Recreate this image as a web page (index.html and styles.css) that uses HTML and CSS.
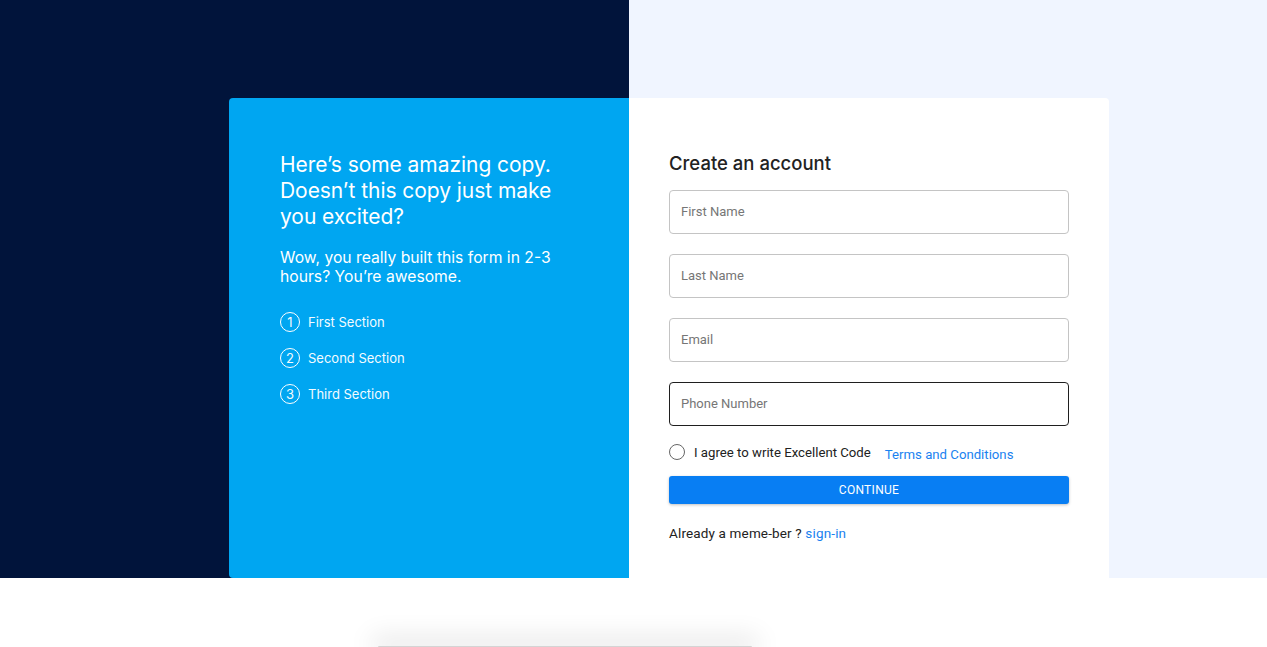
FILE: index.html
```html
<!DOCTYPE html>
<html>
<head>
<meta charset="utf-8">
<link rel="stylesheet" href="styles.css">
</head>
<body>
<section class="hero">
  <div class="card">
    <div class="promo">
      <h1 class="promo-title">Here’s some amazing copy. Doesn’t this copy just make you excited?</h1>
      <p class="promo-sub">Wow, you really built this form in 2-3 hours? You’re awesome.</p>
      <ul class="steps">
        <li class="step"><span class="step-num">1</span>First Section</li>
        <li class="step"><span class="step-num">2</span>Second Section</li>
        <li class="step"><span class="step-num">3</span>Third Section</li>
      </ul>
    </div>
    <form class="form">
      <h2 class="form-title">Create an account</h2>
      <div class="field"><input class="input" type="text" placeholder="First Name"></div>
      <div class="field"><input class="input" type="text" placeholder="Last Name"></div>
      <div class="field"><input class="input" type="text" placeholder="Email"></div>
      <div class="field"><input class="input input-focus" type="text" placeholder="Phone Number"></div>
      <div class="agree">
        <span class="radio"></span>
        <span class="agree-text">I agree to write Excellent Code</span>
        <a class="link terms">Terms and Conditions</a>
      </div>
      <button class="btn" type="button">CONTINUE</button>
      <p class="signin">Already a meme-ber ? <a class="link">sign-in</a></p>
    </form>
  </div>
</section>
<div class="below">
  <div class="floater"></div>
</div>
</body>
</html>
```

FILE: styles.css
```css
* { box-sizing: border-box; }
html, body { margin: 0; padding: 0; }
body {
  font-family: Inter, "Noto Sans", sans-serif;
  background: #ffffff;
  width: 1267px;
  overflow: hidden;
  height: 647px;
}
.hero {
  height: 578px;
  background: linear-gradient(to right, #01143b 0, #01143b 629px, #f0f5ff 629px);
  padding: 98px 0 0 229px;
}
.card {
  display: flex;
  width: 880px;
  height: 480px;
}
.promo {
  width: 400px;
  background: #00a6f1;
  border-radius: 4px 0 0 4px;
  padding: 54px 40px 0 51px;
  color: #ffffff;
}
.promo-title {
  margin: 0;
  font-size: 21px;
  line-height: 26px;
  font-weight: 400;
  letter-spacing: -0.05px;
}
.promo-sub {
  margin: 18px 0 0;
  font-size: 15.7px;
  line-height: 19px;
  font-weight: 400;
}
.steps {
  list-style: none;
  margin: 26px 0 0;
  padding: 0;
}
.step {
  display: flex;
  align-items: center;
  height: 20px;
  margin-bottom: 16px;
  font-size: 13px;
  color: #f3fbff;
}
.step-num {
  width: 20px;
  height: 20px;
  border: 1.3px solid #ffffff;
  border-radius: 50%;
  display: flex;
  align-items: center;
  justify-content: center;
  font-size: 13px;
  margin-right: 8px;
}
.form {
  width: 480px;
  background: #ffffff;
  border-radius: 0 4px 0 0;
  padding: 53px 40px 0 40px;
}
.form-title {
  margin: 0 0 15px;
  font-size: 18.5px;
  line-height: 24px;
  font-weight: 500;
  color: #222222;
}
.field { margin-bottom: 20px; }
.input {
  display: block;
  width: 400px;
  height: 44px;
  border: 1px solid #c4c4c4;
  border-radius: 4px;
  padding: 0 11px 2px;
  font-family: Roboto, "Liberation Sans", sans-serif;
  font-size: 13px;
  color: #222;
  outline: none;
}
.input::placeholder { color: #767676; }
.input-focus { border-color: #1f1f1f; }
.agree {
  display: flex;
  align-items: center;
  height: 20px;
  margin-top: -4px;
}
.radio {
  width: 16px;
  height: 16px;
  border: 1.6px solid #666666;
  border-radius: 50%;
  margin-right: 9px;
}
.agree-text {
  font-family: Roboto, "Liberation Sans", sans-serif;
  font-size: 13.2px;
  color: #222;
  margin-right: 14px;
}
.link {
  color: #1a82f0;
  font-family: Roboto, "Liberation Sans", sans-serif;
  font-size: 13px;
}
.terms { position: relative; top: 2px; font-size: 13.2px; }
.btn {
  display: block;
  width: 400px;
  height: 28px;
  margin-top: 14px;
  border: none;
  border-radius: 3px;
  background: #087ef3;
  color: #ffffff;
  font-family: Roboto, "Liberation Sans", sans-serif;
  font-size: 12px;
  letter-spacing: 0.3px;
  box-shadow: 0 1px 3px rgba(0,0,0,0.25);
}
.signin {
  margin: 21px 0 0;
  font-family: Roboto, "Liberation Sans", sans-serif;
  font-size: 13.5px;
  letter-spacing: 0.15px;
  color: #222;
}
.signin .link { font-size: 13.5px; }
.below {
  padding: 68px 0 0 378px;
}
.floater {
  width: 374px;
  height: 1px;
  background: #d4d4d4;
  box-shadow: 0 -2px 26px 6px rgba(0,0,0,0.13);
  border-radius: 4px 4px 0 0;
}
```
